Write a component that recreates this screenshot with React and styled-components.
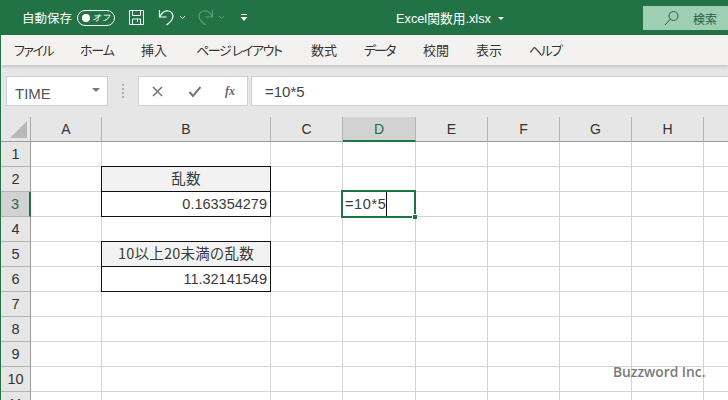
import React from "react";
import styled, { createGlobalStyle } from "styled-components";

const Global = createGlobalStyle`
  html, body { margin: 0; padding: 0; background: #fff; }
  body { width: 728px; height: 400px; overflow: hidden; font-family: "Noto Sans CJK JP", "Noto Sans", sans-serif; }
`;

const Page = styled.div`
  position: relative;
  width: 728px;
  height: 400px;
  overflow: hidden;
  display: flex;
  flex-direction: column;
  border-left: 1px solid #217346;
  box-sizing: border-box;
`;

const TitleBar = styled.header`
  height: 35px;
  margin-left: -1px;
  background: #217346;
  color: #fff;
  display: flex;
  align-items: center;
  flex: none;
  font-size: 12px;
`;

const QuickAccess = styled.div`
  display: flex;
  align-items: center;
  padding-left: 22px;
  width: 396px;
  box-sizing: border-box;
`;

const AutoSaveLabel = styled.span`
  font-size: 12.5px;
  width: 55px;
  white-space: nowrap;
`;

const Toggle = styled.span`
  width: 38px;
  height: 16px;
  border: 1px solid #fff;
  border-radius: 8px;
  display: flex;
  align-items: center;
  padding: 0 4px 0 4px;
  justify-content: space-between;
  font-size: 9px;
  font-style: italic;
  box-sizing: border-box;
  flex: none;
`;

const Knob = styled.span`
  width: 8px;
  height: 8px;
  border-radius: 50%;
  background: #fff;
`;

const QaIcon = styled.svg`
  display: block;
  flex: none;
  margin-left: ${(p) => p.$ml || 0}px;
`;

const FileName = styled.div`
  font-family: "Liberation Sans", "Noto Sans CJK JP", sans-serif;
  font-size: 12.75px;
  display: flex;
  align-items: center;
  gap: 7px;
  width: 247px;
  box-sizing: border-box;
  white-space: nowrap;
`;

const FileCaret = styled.span`
  width: 0;
  height: 0;
  border-left: 3px solid transparent;
  border-right: 3px solid transparent;
  border-top: 3px solid #fff;
  margin-top: 1px;
`;

const SearchBox = styled.div`
  flex: none;
  width: 85px;
  height: 24px;
  align-self: flex-start;
  margin-top: 6px;
  background: #9fcfb3;
  color: #23603f;
  display: flex;
  align-items: center;
  padding-left: 21px;
  gap: 13px;
  box-sizing: border-box;
  font-size: 12px;
`;

const Tabs = styled.nav`
  height: 30px;
  flex: none;
  background: #f3f2f1;
  display: flex;
  align-items: center;
  padding: 0 0 2px 13px;
  box-sizing: border-box;
  color: #333;
  font-size: 13px;
  box-shadow: 0 2px 3px rgba(0, 0, 0, 0.14);
  position: relative;
  z-index: 1;
`;

const Tab = styled.span`
  width: ${(p) => p.$w}px;
  flex: none;
  white-space: nowrap;
  font-feature-settings: "palt";
  letter-spacing: ${(p) => p.$track || 0}px;
`;

const FormulaBar = styled.div`
  height: 52px;
  flex: none;
  background: #e6e6e6;
  display: flex;
  align-items: flex-start;
  padding: 11px 0 0 5px;
  box-sizing: border-box;
`;

const WhiteBox = styled.div`
  height: 30px;
  background: #fff;
  border: 1px solid #d0d0d0;
  box-sizing: border-box;
  display: flex;
  align-items: center;
`;

const NameBox = styled(WhiteBox)`
  width: 102px;
  padding: 0 7px 0 8px;
  justify-content: space-between;
  font-family: "Liberation Sans", sans-serif;
  font-size: 15px;
  color: #555;
`;

const NameText = styled.span`
  padding-top: 5px;
`;

const Caret = styled.span`
  width: 0;
  height: 0;
  border-left: 4px solid transparent;
  border-right: 4px solid transparent;
  border-top: 4px solid #777;
  margin-top: -3px;
`;

const Dots = styled.div`
  width: 30px;
  height: 30px;
  flex: none;
  display: flex;
  flex-direction: column;
  justify-content: center;
  align-items: center;
  gap: 2px;
`;

const Dot = styled.span`
  width: 2px;
  height: 2px;
  background: #b0b0b0;
`;

const FnButtons = styled(WhiteBox)`
  width: 110px;
  justify-content: space-between;
  padding: 0 12px;
  flex: none;
`;

const FxLabel = styled.span`
  font-family: "Liberation Serif", serif;
  font-style: italic;
  font-weight: 700;
  font-size: 12px;
  color: #666;
`;

const FormulaInput = styled(WhiteBox)`
  flex: 1;
  margin-left: 3px;
  padding-left: 13px;
  border-right: none;
  font-family: "Liberation Sans", sans-serif;
  font-size: 15px;
  color: #444;
`;

const Sheet = styled.div`
  display: grid;
  grid-template-columns: 30px 71px 169px 72px 73px 72px 72px 72px 72px 40px;
  grid-template-rows: 25px;
  grid-auto-rows: 25px;
  background: #fff;
  font-family: "Noto Sans CJK JP", sans-serif;
  font-size: 15px;
  color: #333;
`;

const Corner = styled.div`
  background: #e6e6e6;
  border-right: 1px solid #aaa;
  border-bottom: 1px solid #9a9a9a;
  box-sizing: border-box;
  position: relative;
  overflow: hidden;
  &::after {
    content: "";
    position: absolute;
    right: 3px;
    bottom: 3px;
    border-style: solid;
    border-width: 0 0 17px 17px;
    border-color: transparent transparent #b8b8b8 transparent;
  }
`;

const ColHead = styled.div`
  background: ${(p) => (p.$active ? "#d2d2d2" : "#e6e6e6")};
  color: ${(p) => (p.$active ? "#1f6b45" : "#333")};
  border-right: 1px solid #b4b4b4;
  border-bottom: ${(p) => (p.$active ? "2px solid #217346" : "1px solid #9a9a9a")};
  box-sizing: border-box;
  display: flex;
  align-items: center;
  justify-content: center;
  font-family: "Liberation Sans", sans-serif;
  font-size: 14px;
`;

const RowHead = styled.div`
  background: ${(p) => (p.$active ? "#d2d2d2" : "#e6e6e6")};
  color: ${(p) => (p.$active ? "#1f6b45" : "#333")};
  border-right: ${(p) => (p.$active ? "2px solid #217346" : "1px solid #9a9a9a")};
  border-bottom: 1px solid #b4b4b4;
  box-sizing: border-box;
  display: flex;
  align-items: center;
  justify-content: center;
  padding-bottom: 1px;
  font-family: "Liberation Sans", sans-serif;
  font-size: 14.5px;
`;

const Cell = styled.div`
  border-right: 1px solid #d4d4d4;
  border-bottom: 1px solid #d4d4d4;
  box-sizing: border-box;
  white-space: nowrap;
  display: flex;
  align-items: center;
`;

const BoxCell = styled(Cell)`
  outline: 1px solid #111;
  outline-offset: -1px;
  margin: -1px 0 0 -1px;
  width: calc(100% + 1px);
  height: calc(100% + 1px);
  border: none;
  position: relative;
`;

const LabelCell = styled(BoxCell)`
  background: #f2f2f2;
  justify-content: center;
  padding-bottom: 3px;
  font-size: 14.5px;
  letter-spacing: 0.2px;
  color: #3a3a3a;
`;

const ValueCell = styled(BoxCell)`
  justify-content: flex-end;
  padding: 0 4px 1px 0;
  font-family: "Liberation Sans", sans-serif;
  font-size: 14.5px;
  color: #3a3a3a;
`;

const ActiveCell = styled(Cell)`
  position: relative;
  z-index: 2;
  margin: -2px 0 0 -2px;
  width: calc(100% + 2px);
  height: calc(100% + 3px);
  border: 2px solid #217346;
  padding-left: 2px;
  font-family: "Liberation Sans", sans-serif;
  font-size: 14.5px;
  letter-spacing: 0.6px;
  color: #3a3a3a;
  &::after {
    content: "";
    position: absolute;
    right: -3px;
    bottom: -3px;
    width: 4px;
    height: 4px;
    background: #217346;
    border-left: 1px solid #fff;
    border-top: 1px solid #fff;
  }
`;

const TextCaret = styled.span`
  width: 1px;
  height: 24px;
  background: #111;
`;

const Watermark = styled.div`
  position: absolute;
  left: 612px;
  top: 362px;
  font-family: "Open Sans", sans-serif;
  font-weight: 600;
  font-size: 13.8px;
  color: #7a7a7a;
  white-space: nowrap;
`;

const cols = ["A", "B", "C", "D", "E", "F", "G", "H", "I"];
const rows = [1, 2, 3, 4, 5, 6, 7, 8, 9, 10, 11];
const content = {
  "2B": <LabelCell>乱数</LabelCell>,
  "3B": <ValueCell>0.163354279</ValueCell>,
  "5B": <LabelCell>10以上20未満の乱数</LabelCell>,
  "6B": <ValueCell>11.32141549</ValueCell>,
  "3D": (
    <ActiveCell>
      =10*5
      <TextCaret />
    </ActiveCell>
  ),
};

const tabs = [
  ["ファイル", 66, -1.5],
  ["ホーム", 61, -1.2],
  ["挿入", 55, 0],
  ["ページ レイアウト", 115, -1.4],
  ["数式", 53, 0],
  ["データ", 59, -2],
  ["校閲", 53, 0],
  ["表示", 53, 0],
  ["ヘルプ", 60, -1.6],
];

export default function App() {
  return (
    <Page>
      <Global />
      <TitleBar>
        <QuickAccess>
          <AutoSaveLabel>自動保存</AutoSaveLabel>
          <Toggle>
            <Knob />
            <span>オフ</span>
          </Toggle>
          <QaIcon $ml={13} width="17" height="17" viewBox="0 0 17 17" fill="none" stroke="#fff" strokeWidth="1">
            <path d="M1.5 1.5h14v14h-14z" />
            <path d="M4.5 1.5v5h8v-5M4.5 15.5v-5.500h8v5.500M9.500 10v3" />
          </QaIcon>
          <QaIcon $ml={13} width="17" height="17" viewBox="0 0 17 17" fill="none" stroke="#fff" strokeWidth="1.200">
            <path d="M1.500 1v7h7" />
            <path d="M2 7.500C4 3.500 7.500 1.500 10.500 2c3.500.5 5.500 4 4 7.500-1 2.500-4 5-6 6.500" />
          </QaIcon>
          <QaIcon $ml={4} width="7" height="5" viewBox="0 0 7 5" fill="none" stroke="#fff" strokeWidth="1">
            <path d="M1 1l2.500 2.500L6 1" />
          </QaIcon>
          <QaIcon $ml={11} width="17" height="17" viewBox="0 0 17 17" fill="none" stroke="#5d9b7c" strokeWidth="1.200">
            <path d="M15.500 1v7h-7" />
            <path d="M15 7.500C13 3.500 9.500 1.500 6.500 2c-3.500.5-5.500 4-4 7.500 1 2.500 4 5 6 6.500" />
          </QaIcon>
          <QaIcon $ml={4} width="7" height="5" viewBox="0 0 7 5" fill="none" stroke="#5d9b7c" strokeWidth="1">
            <path d="M1 1l2.500 2.500L6 1" />
          </QaIcon>
          <QaIcon $ml={15} width="8" height="8" viewBox="0 0 8 8" fill="#fff" stroke="none">
            <path d="M1 0h6v1H1zM0.500 3h7L4 7z" />
          </QaIcon>
        </QuickAccess>
        <FileName>
          <span>Excel関数用.xlsx</span>
          <FileCaret />
        </FileName>
        <SearchBox>
          <svg width="16" height="16" viewBox="0 0 16 16" fill="none" stroke="#23603f" strokeWidth="1">
            <circle cx="9.500" cy="6" r="4.500" />
            <path d="M6.200 9.300L1 15" />
          </svg>
          <span>検索</span>
        </SearchBox>
      </TitleBar>
      <Tabs>
        {tabs.map(([t, w, track]) => (
          <Tab key={t} $w={w} $track={track}>
            {t}
          </Tab>
        ))}
      </Tabs>
      <FormulaBar>
        <NameBox>
          <NameText>TIME</NameText>
          <Caret />
        </NameBox>
        <Dots>
          <Dot />
          <Dot />
          <Dot />
          <Dot />
        </Dots>
        <FnButtons>
          <svg width="13" height="13" viewBox="0 0 13 13" stroke="#777" strokeWidth="1.600" fill="none">
            <path d="M2 2l9 9M11 2l-9 9" />
          </svg>
          <svg width="14" height="13" viewBox="0 0 14 13" stroke="#777" strokeWidth="2" fill="none">
            <path d="M1.500 7l3.500 4 7.500-9" />
          </svg>
          <FxLabel>fx</FxLabel>
        </FnButtons>
        <FormulaInput>=10*5</FormulaInput>
      </FormulaBar>
      <Sheet>
        <Corner />
        {cols.map((c) => (
          <ColHead key={c} $active={c === "D"}>
            {c === "I" ? "" : c}
          </ColHead>
        ))}
        {rows.map((r) => (
          <React.Fragment key={r}>
            <RowHead $active={r === 3}>{r}</RowHead>
            {cols.map((c) =>
              content[`${r}${c}`] ? (
                <React.Fragment key={c}>{content[`${r}${c}`]}</React.Fragment>
              ) : (
                <Cell key={c} />
              )
            )}
          </React.Fragment>
        ))}
      </Sheet>
      <Watermark>Buzzword Inc.</Watermark>
    </Page>
  );
}
